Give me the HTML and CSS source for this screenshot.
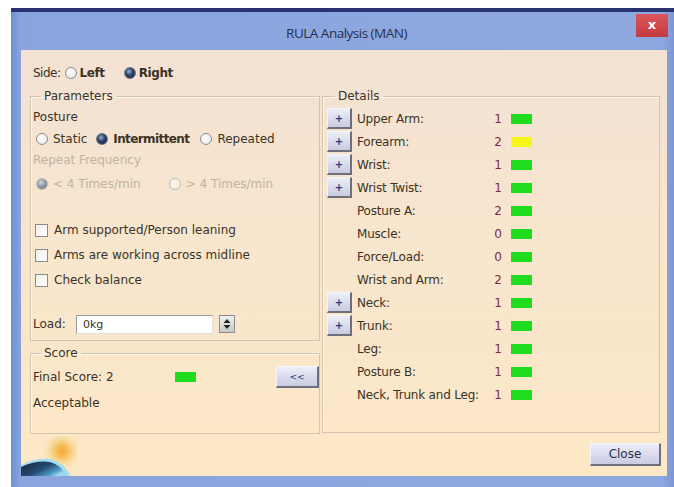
FILE: index.html
```html
<!DOCTYPE html>
<html lang="en">
<head>
<meta charset="utf-8">
<title>RULA Analysis (MAN)</title>
<link rel="stylesheet" href="styles.css">
</head>
<body>
<div class="window">
  <div class="titlebar">
    <span></span>
    <span class="title">RULA Analysis (MAN)</span>
    <span class="close-x">x</span>
  </div>
  <div class="content">
    <div class="main">
      <div class="side-row">
        <span class="lbl">Side:</span>
        <span class="radio"></span><span class="opt bold w-left">Left</span>
        <span class="radio on"></span><span class="opt bold">Right</span>
      </div>
      <div class="columns">
        <div class="left-col">
          <fieldset class="group params">
            <legend>Parameters</legend>
            <div class="row r-posture">Posture</div>
            <div class="row r-radios">
              <span class="radio"></span><span class="opt">Static</span>
              <span class="radio on"></span><span class="opt semi">Intermittent</span>
              <span class="radio"></span><span class="opt">Repeated</span>
            </div>
            <div class="row r-freq disabled">Repeat Frequency</div>
            <div class="row r-freqopts disabled">
              <span class="radio on dis"></span><span class="opt w-freq">&lt; 4 Times/min</span>
              <span class="radio dis"></span><span class="opt">&gt; 4 Times/min</span>
            </div>
            <div class="row r-cb1"><span class="check"></span>Arm supported/Person leaning</div>
            <div class="row r-cb"><span class="check"></span>Arms are working across midline</div>
            <div class="row r-cb"><span class="check"></span>Check balance</div>
            <div class="row r-load">
              <span class="lbl">Load:</span>
              <span class="input">0kg</span>
              <span class="spin">
                <svg width="14" height="16" viewBox="0 0 14 16"><path d="M7 3 L10.5 7 L3.5 7 Z" fill="#222"/><path d="M7 13 L10.5 9 L3.5 9 Z" fill="#222"/></svg>
              </span>
            </div>
          </fieldset>
          <fieldset class="group score">
            <legend>Score</legend>
            <div class="score-row">
              <span class="final">Final Score: 2</span>
              <span class="bar green"></span>
              <span class="btn back">&lt;&lt;</span>
            </div>
            <div class="accept">Acceptable</div>
          </fieldset>
        </div>
        <fieldset class="group details">
          <legend>Details</legend>
          <div class="drow"><span class="btn plus">+</span><span class="dl">Upper Arm:</span><span class="num">1</span><span class="bar green"></span></div>
          <div class="drow"><span class="btn plus">+</span><span class="dl">Forearm:</span><span class="num">2</span><span class="bar yellow"></span></div>
          <div class="drow"><span class="btn plus">+</span><span class="dl">Wrist:</span><span class="num">1</span><span class="bar green"></span></div>
          <div class="drow"><span class="btn plus">+</span><span class="dl">Wrist Twist:</span><span class="num">1</span><span class="bar green"></span></div>
          <div class="drow"><span class="nobtn"></span><span class="dl">Posture A:</span><span class="num">2</span><span class="bar green"></span></div>
          <div class="drow"><span class="nobtn"></span><span class="dl">Muscle:</span><span class="num">0</span><span class="bar green"></span></div>
          <div class="drow"><span class="nobtn"></span><span class="dl">Force/Load:</span><span class="num">0</span><span class="bar green"></span></div>
          <div class="drow"><span class="nobtn"></span><span class="dl">Wrist and Arm:</span><span class="num">2</span><span class="bar green"></span></div>
          <div class="drow"><span class="btn plus">+</span><span class="dl">Neck:</span><span class="num">1</span><span class="bar green"></span></div>
          <div class="drow"><span class="btn plus">+</span><span class="dl">Trunk:</span><span class="num">1</span><span class="bar green"></span></div>
          <div class="drow"><span class="nobtn"></span><span class="dl">Leg:</span><span class="num">1</span><span class="bar green"></span></div>
          <div class="drow"><span class="nobtn"></span><span class="dl">Posture B:</span><span class="num">1</span><span class="bar green"></span></div>
          <div class="drow"><span class="nobtn"></span><span class="dl">Neck, Trunk and Leg:</span><span class="num">1</span><span class="bar green"></span></div>
        </fieldset>
      </div>
    </div>
    <div class="footer">
      <svg class="logo" width="56" height="40" viewBox="0 0 56 40">
        <defs>
          <radialGradient id="sun" cx="41" cy="15" r="22" gradientUnits="userSpaceOnUse">
            <stop offset="0" stop-color="#f2a82e"/>
            <stop offset="0.3" stop-color="#f6bd58" stop-opacity="0.9"/>
            <stop offset="0.65" stop-color="#f9d89a" stop-opacity="0.55"/>
            <stop offset="1" stop-color="#fbe8c8" stop-opacity="0"/>
          </radialGradient>
          <linearGradient id="earth" x1="0" y1="0" x2="1" y2="0.6">
            <stop offset="0" stop-color="#1c2440"/>
            <stop offset="0.55" stop-color="#244a70"/>
            <stop offset="0.85" stop-color="#4d9cc4"/>
            <stop offset="1" stop-color="#9fd8ee"/>
          </linearGradient>
        </defs>
        <rect width="56" height="40" fill="url(#sun)"/>
        <path d="M0 29 Q16 21 30 23 Q42 26 50 40 L0 40 Z" fill="#a6dcf0"/>
        <path d="M0 31 Q16 24 29 26 Q40 29 46 40 L0 40 Z" fill="url(#earth)"/>
      </svg>
      <span class="btn close">Close</span>
    </div>
  </div>
</div>
</body>
</html>
```
FILE: styles.css
```css
html, body {
  margin: 0;
  padding: 0;
  background: #ffffff;
}

body {
  font-family: "DejaVu Sans", sans-serif;
  font-size: 12px;
  color: #3b3326;
}

.window {
  margin: 8px 0 0 11px;
  width: 663px;
  height: 479px;
  box-sizing: border-box;
  border-top: 4px solid #2a3371;
  background: linear-gradient(90deg, #6f8fd4 0, #8aa5de 10px, #8ea8df 650px, #7d97d6 100%);
  display: flex;
  flex-direction: column;
}

.titlebar {
  height: 38px;
  display: grid;
  grid-template-columns: 1fr auto 1fr;
  align-items: start;
}

.title {
  font-family: "Open Sans", sans-serif;
  font-size: 13.5px;
  color: #27304e;
  margin: 12px 0 0 8px;
  letter-spacing: -0.5px;
}

.close-x {
  justify-self: end;
  width: 32px;
  height: 23px;
  margin: 2px 6px 0 0;
  background: linear-gradient(#d8575a, #c63a3f);
  color: #fff;
  font-family: "DejaVu Sans", sans-serif;
  font-weight: bold;
  font-size: 13px;
  text-align: center;
  line-height: 21px;
}

.content {
  flex: 1;
  margin: 0 7px 11px 10px;
  background: linear-gradient(180deg, #f3e2d3 0, #f8e6cd 50%, #fde8c6 100%);
  display: flex;
  flex-direction: column;
}

.main {
  padding: 15px 7px 0 9px;
}

.side-row {
  height: 16px;
  display: flex;
  align-items: center;
  padding-left: 3px;
}

.side-row .lbl {
  margin-right: 4px;
  letter-spacing: -0.5px;
}

.side-row .radio {
  margin-right: 3px;
}

.side-row .w-left {
  margin-right: 19px;
}

.radio {
  width: 10px;
  height: 10px;
  border-radius: 50%;
  border: 1px solid #8e8e8e;
  background: radial-gradient(circle at 40% 35%, #ffffff, #e4e4e4);
  margin-right: 5px;
  flex: none;
}

.radio.on {
  border-color: #6c7680;
  background: radial-gradient(circle at 40% 35%, #8fb0d8 0, #2a3e66 45%, #1c2438 100%);
}

.radio.dis {
  border-color: #c4bcb0;
  background: radial-gradient(circle at 40% 35%, #fffaf2, #ece4d8);
}

.radio.on.dis {
  background: radial-gradient(circle at 40% 35%, #d0d6e0 0, #8690a0 55%, #7a8290 100%);
}

.opt {
  margin-right: 9px;
}

.bold {
  font-weight: bold;
  letter-spacing: -0.4px;
}

.semi {
  font-weight: bold;
  letter-spacing: -0.6px;
  margin-right: 11px;
}

.columns {
  margin-top: 8px;
  display: flex;
  gap: 2px;
}

.left-col {
  width: 290px;
  display: flex;
  flex-direction: column;
  gap: 5px;
}

.group {
  margin: 0;
  padding: 0;
  border: 1px solid #d3c6b1;
  box-shadow: inset 1px 1px 0 #fff7ea;
  box-sizing: border-box;
  min-width: 0;
}

.group legend {
  padding: 0 3px;
  margin-left: 8px;
  line-height: 14px;
}

.params {
  height: 252px;
  padding: 0 0 0 2px;
}

.row {
  height: 20px;
  display: flex;
  align-items: center;
}

.r-posture { margin-top: 4px; }
.r-radios { margin-top: 2px; padding-left: 3px; }
.r-freq { margin-top: 1px; }
.r-freqopts { margin-top: 4px; padding-left: 3px; }
.r-freqopts .w-freq { margin-right: 28px; }
.r-cb1 { margin-top: 26px; }
.r-cb { margin-top: 5px; }
.r-cb:last-of-type { margin-top: 6px; }
.r-load { margin-top: 24px; }

.disabled {
  color: #c0b3a0;
}

.check {
  width: 11px;
  height: 11px;
  border: 1px solid #8c8a84;
  background: linear-gradient(135deg, #f0eee8, #ffffff);
  margin: 0 6px 0 2px;
  flex: none;
}

.r-load .lbl {
  width: 43px;
}

.input {
  width: 129px;
  height: 17px;
  border: 1px solid #9a9a9a;
  border-right-color: #e0e0e0;
  border-bottom-color: #e0e0e0;
  background: #fff;
  padding-left: 6px;
  line-height: 17px;
  font-size: 11px;
}

.spin {
  margin-left: 6px;
  width: 14px;
  height: 16px;
  border: 1px solid #8a8a8a;
  background: linear-gradient(#f2f2f2, #c8c8c8);
  display: flex;
}

.score {
  height: 88px;
  padding: 0 0 0 2px;
}

.score legend {
  margin-top: 2px;
}

.score-row {
  height: 22px;
  margin-top: 6px;
  display: flex;
  align-items: center;
}

.final {
  width: 142px;
}

.bar {
  width: 21px;
  height: 10px;
  flex: none;
}

.bar.green { background: #1fdc1f; }
.bar.yellow { background: #f6f51a; }

.btn {
  background: linear-gradient(#eceef8, #c9cbe2);
  border: 1px solid #f4f4fb;
  border-right: 2px solid #6f6f7a;
  border-bottom: 2px solid #6f6f7a;
  box-sizing: border-box;
  color: #2d3a78;
  display: flex;
  align-items: center;
  justify-content: center;
}

.back {
  margin-left: 80px;
  width: 43px;
  height: 22px;
  font-size: 9px;
}

.accept {
  margin-top: 5px;
  line-height: 20px;
}

.details {
  width: 338px;
  height: 344px;
  padding: 4px 0 0 4px;
}

.drow {
  height: 23px;
  display: flex;
  align-items: center;
}

.plus, .nobtn {
  width: 25px;
  height: 21px;
  flex: none;
}

.plus {
  font-size: 10px;
  font-weight: bold;
}

.dl {
  margin-left: 5px;
  width: 137px;
  letter-spacing: -0.2px;
}

.num {
  width: 8px;
  text-align: right;
  color: #7e2a3e;
}

.drow .bar {
  margin-left: 9px;
}

.footer {
  flex: 1;
  display: flex;
  justify-content: space-between;
  align-items: flex-end;
}

.logo {
  display: block;
}

.close {
  width: 71px;
  height: 23px;
  margin: 0 6px 10px 0;
  color: #2b2f48;
}
```
